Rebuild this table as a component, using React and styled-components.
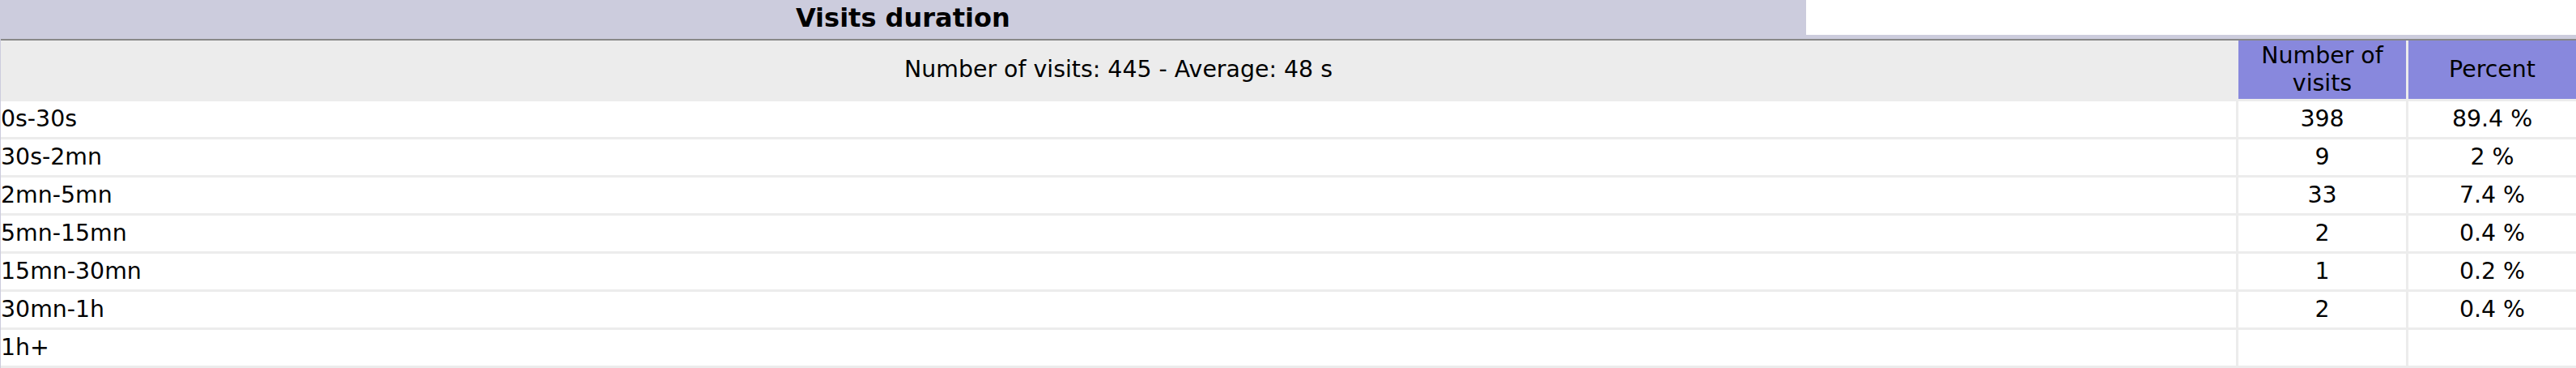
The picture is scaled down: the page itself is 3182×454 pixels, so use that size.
import React from 'react'
import styled, { createGlobalStyle } from 'styled-components'

const GlobalStyle = createGlobalStyle`
    html, body {
        margin : 0;
        padding : 0;
        background : #FFFFFF;
    }
    body {
        font-family : "DejaVu Sans", Verdana, sans-serif;
        color : #000000;
    }
`

const rows = [
    { label : '0s-30s', visits : '398', percent : '89.4 %' },
    { label : '30s-2mn', visits : '9', percent : '2 %' },
    { label : '2mn-5mn', visits : '33', percent : '7.4 %' },
    { label : '5mn-15mn', visits : '2', percent : '0.4 %' },
    { label : '15mn-30mn', visits : '1', percent : '0.2 %' },
    { label : '30mn-1h', visits : '2', percent : '0.4 %' },
    { label : '1h+', visits : '', percent : '' },
]

const BorderBox = styled.div`
    width : 100%;
    background : #CCCCDD;
`

const TitleRow = styled.div`
    display : flex;
    height : 43px;
`

const Title = styled.div`
    flex : 0 0 70.1%;
    display : flex;
    align-items : center;
    justify-content : center;
    font-size : 32px;
    font-weight : bold;
`

const Blank = styled.div`
    flex : 1;
    background : #FFFFFF;
`

const DataWrap = styled.div`
    padding : 5px 0 0 1px;
`

const DataTable = styled.div`
    border-top : 2px solid #888888;
    background : #FFFFFF;
`

const Row = styled.div`
    display : grid;
    grid-template-columns : 1fr 210px 207px;
`

const Cell = styled.div`
    box-sizing : border-box;
    height : ${props => props.$head ? '75px' : '47px'};
    display : flex;
    align-items : center;
    justify-content : ${props => props.$left ? 'flex-start' : 'center'};
    text-align : center;
    font-size : 28.4px;
    line-height : 34px;
    background : ${props => props.$bg || '#FFFFFF'};
    border-bottom : 3px solid #ECECEC;
    border-right : ${props => props.$last ? '0' : '3px solid #ECECEC'};
    white-space : ${props => props.$head ? 'normal' : 'nowrap'};
`

const App = () => {
    return (
        <>
            <GlobalStyle/>
            <BorderBox>
                <TitleRow>
                    <Title>Visits duration</Title>
                    <Blank/>
                </TitleRow>
                <DataWrap>
                    <DataTable>
                        <Row>
                            <Cell $head $bg='#ECECEC'>Number of visits: 445 - Average: 48 s</Cell>
                            <Cell $head $bg='#8888DD'>Number of visits</Cell>
                            <Cell $head $last $bg='#8888DD'>Percent</Cell>
                        </Row>
                        {rows.map(r => (
                            <Row key={r.label}>
                                <Cell $left>{r.label}</Cell>
                                <Cell>{r.visits}</Cell>
                                <Cell $last>{r.percent}</Cell>
                            </Row>
                        ))}
                    </DataTable>
                </DataWrap>
            </BorderBox>
        </>
    )
}

export default App
